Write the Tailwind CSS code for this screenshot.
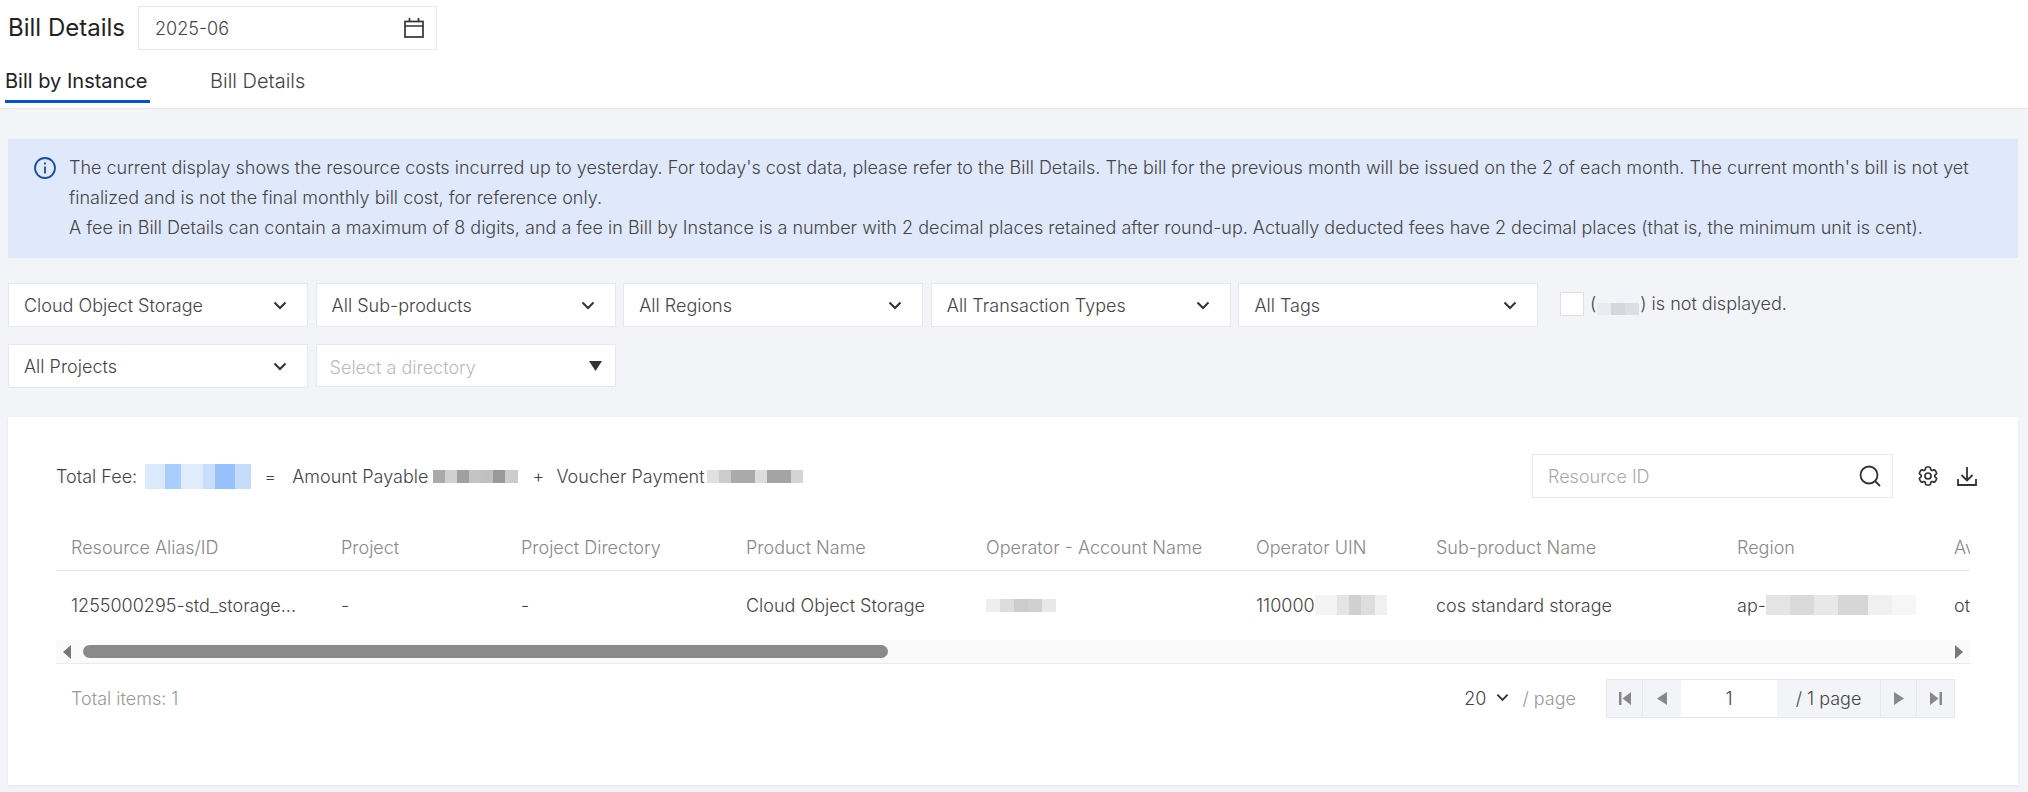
<!DOCTYPE html>
<html lang="en">
<head>
  <meta charset="UTF-8" />
  <title>Bill Details</title>
  <script src="https://cdn.jsdelivr.net/npm/@tailwindcss/browser@4"></script>
</head>

<body class="h-[792px] w-[2028px] overflow-hidden bg-[#f2f4f8] font-['Inter',sans-serif] text-[18px] font-light text-[#444]">
  <!-- page header -->
  <div class="h-[109px] border-b border-[#e4e6eb] bg-white">
    <div class="flex items-center pt-[6px] pl-[8px]">
      <h1 class="w-[130px] text-[24px] leading-[44px] font-normal text-[#222]">Bill Details</h1>
      <div class="flex h-[44px] w-[299px] items-center justify-between border border-[#e6e8ec] pr-[12px] pl-[16px]">
        <span>2025-06</span>
        <svg class="h-[20px] w-[20px]" viewBox="0 0 20 20" fill="none" stroke="#333" stroke-width="1.7"><rect x="1" y="3.5" width="18" height="15.5"/><path d="M1 8h18M5.5 0v3.5M14.500 0v3.500"/></svg>
      </div>
    </div>
    <div class="mt-[14px] flex pl-[5px] text-[20px]">
      <div class="h-[39px] w-[145px] border-b-[3px] border-[#0052d9] leading-[34px] font-normal whitespace-nowrap text-[#222]">Bill by Instance</div>
      <div class="ml-[60px] leading-[34px] text-[#444]">Bill Details</div>
    </div>
  </div>

  <!-- notice -->
  <div class="mx-[8px] mt-[30px] flex h-[119px] w-[2010px] bg-[#e0e9fb] pt-[14px] pl-[26px] leading-[30px]">
    <svg class="mt-[4px] h-[22px] w-[22px] shrink-0" viewBox="0 0 22 22" fill="none" stroke="#1a4fa3" stroke-width="1.8"><circle cx="11" cy="11" r="10"/><path d="M11 9.500v7M11 5.500v2"/></svg>
    <div class="ml-[13px] w-[1930px]">
      <p>The current display shows the resource costs incurred up to yesterday. For today's cost data, please refer to the Bill Details. The bill for the previous month will be issued on the 2 of each month. The current month's bill is not yet finalized and is not the final monthly bill cost, for reference only.</p>
      <p>A fee in Bill Details can contain a maximum of 8 digits, and a fee in Bill by Instance is a number with 2 decimal places retained after round-up. Actually deducted fees have 2 decimal places (that is, the minimum unit is cent).</p>
    </div>
  </div>

  <!-- filters -->
  <div class="mt-[25px] ml-[8px] flex items-start gap-x-[7.6px]">
    <div class="flex h-[44px] w-[300px] items-center justify-between border border-[#e6e8ec] bg-white pr-[20px] pl-[15px]">Cloud Object Storage
      <svg class="h-[9px] w-[14px]" viewBox="0 0 14 9" fill="none" stroke="#333" stroke-width="2"><path d="M1.500 1.500 7 7l5.500-5.500"/></svg></div>
    <div class="flex h-[44px] w-[300px] items-center justify-between border border-[#e6e8ec] bg-white pr-[20px] pl-[15px]">All Sub-products
      <svg class="h-[9px] w-[14px]" viewBox="0 0 14 9" fill="none" stroke="#333" stroke-width="2"><path d="M1.500 1.500 7 7l5.500-5.500"/></svg></div>
    <div class="flex h-[44px] w-[300px] items-center justify-between border border-[#e6e8ec] bg-white pr-[20px] pl-[15px]">All Regions
      <svg class="h-[9px] w-[14px]" viewBox="0 0 14 9" fill="none" stroke="#333" stroke-width="2"><path d="M1.500 1.500 7 7l5.500-5.500"/></svg></div>
    <div class="flex h-[44px] w-[300px] items-center justify-between border border-[#e6e8ec] bg-white pr-[20px] pl-[15px]">All Transaction Types
      <svg class="h-[9px] w-[14px]" viewBox="0 0 14 9" fill="none" stroke="#333" stroke-width="2"><path d="M1.500 1.500 7 7l5.500-5.500"/></svg></div>
    <div class="flex h-[44px] w-[300px] items-center justify-between border border-[#e6e8ec] bg-white pr-[20px] pl-[15px]">All Tags
      <svg class="h-[9px] w-[14px]" viewBox="0 0 14 9" fill="none" stroke="#333" stroke-width="2"><path d="M1.500 1.500 7 7l5.500-5.500"/></svg></div>
    <div class="ml-[14px] flex h-[41px] items-center">
      <span class="h-[24px] w-[24px] border border-[#dcdfe6] bg-white"></span>
      <span class="ml-[6px]">(</span>
      <span class="mx-[1px] flex h-[22px] w-[42px] items-end"><i class="h-[12px] w-[14px] bg-[#e9ebef]"></i><i class="h-[12px] w-[14px] bg-[#d5d7dc]"></i><i class="h-[12px] w-[14px] bg-[#dcdee3]"></i></span>
      <span>) is not displayed.</span>
    </div>
  </div>
  <div class="mt-[17px] ml-[8px] flex items-start gap-x-[7.6px]">
    <div class="flex h-[44px] w-[300px] items-center justify-between border border-[#e6e8ec] bg-white pr-[20px] pl-[15px]">All Projects
      <svg class="h-[9px] w-[14px]" viewBox="0 0 14 9" fill="none" stroke="#333" stroke-width="2"><path d="M1.500 1.500 7 7l5.500-5.500"/></svg></div>
    <div class="flex h-[43px] w-[300px] items-center justify-between border border-[#e6e8ec] bg-white pr-[13px] pl-[13px] text-[#bbb]">
      <span class="mt-[4px]">Select a directory</span>
      <svg class="h-[10px] w-[13px]" viewBox="0 0 13 10" fill="#333"><path d="M0 0h13L6.500 10z"/></svg></div>
  </div>

  <!-- bill table card -->
  <div class="mt-[29px] ml-[8px] h-[368px] w-[2010px] bg-white px-[48px] shadow-[0_1px_3px_rgba(0,0,0,0.06)]">
    <div class="flex h-[117px] items-center pt-[1px]">
      <span>Total Fee:</span>
      <span class="ml-[8px] flex h-[25px] w-[106px]"><i class="w-[20px] bg-[#dbe9fd]"></i><i class="w-[16px] bg-[#a9cdfd]"></i><i class="w-[22px] bg-[#e0ecfd]"></i><i class="w-[12px] bg-[#c7defd]"></i><i class="w-[20px] bg-[#97c1fc]"></i><i class="w-[16px] bg-[#c5dcfc]"></i></span>
      <span class="ml-[13px] w-[28px]">=</span>
      <span>Amount Payable</span>
      <span class="ml-[5px] flex h-[13px]"><i class="w-[12px] bg-[#aaa]"></i><i class="w-[12px] bg-[#d0d0d0]"></i><i class="w-[12px] bg-[#a0a0a0]"></i><i class="w-[12px] bg-[#c4c4c4]"></i><i class="w-[12px] bg-[#c0c0c0]"></i><i class="w-[12px] bg-[#999]"></i><i class="w-[13px] bg-[#ccc]"></i></span>
      <span class="ml-[14px] w-[24px]">+</span>
      <span>Voucher Payment</span>
      <span class="ml-[2px] flex h-[13px]"><i class="w-[12px] bg-[#e0e0e0]"></i><i class="w-[12px] bg-[#ccc]"></i><i class="w-[24px] bg-[#aaa]"></i><i class="w-[12px] bg-[#ddd]"></i><i class="w-[24px] bg-[#a4a4a4]"></i><i class="w-[12px] bg-[#d4d4d4]"></i></span>
      <div class="ml-auto flex h-[44px] w-[361px] items-center justify-between border border-[#e6e8ec] pr-[11px] pl-[15px] text-[#aaa]">Resource ID
        <svg class="h-[22px] w-[22px]" viewBox="0 0 22 22" fill="none" stroke="#333" stroke-width="1.800"><circle cx="10" cy="10" r="8.500"/><path d="m16 16 5 5"/></svg></div>
      <svg class="ml-[23px] h-[24px] w-[24px]" viewBox="0 0 24 24" fill="none" stroke="#333" stroke-width="1.700"><path d="M9.594 3.940c.09-.542.56-.94 1.110-.94h2.593c.55 0 1.020.398 1.110.94l.213 1.281c.063.374.313.686.645.870.074.04.147.083.22.127.325.196.72.257 1.075.124l1.217-.456a1.125 1.125 0 0 1 1.370.49l1.296 2.247a1.125 1.125 0 0 1-.26 1.431l-1.003.827c-.293.241-.438.613-.43.992a7.723 7.723 0 0 1 0 .255c-.008.378.137.75.43.991l1.004.827c.424.35.534.955.26 1.430l-1.298 2.247a1.125 1.125 0 0 1-1.369.491l-1.217-.456c-.355-.133-.75-.072-1.076.124a6.470 6.470 0 0 1-.22.128c-.331.183-.581.495-.644.869l-.213 1.281c-.09.543-.56.94-1.110.94h-2.594c-.55 0-1.019-.398-1.110-.94l-.213-1.281c-.062-.374-.312-.686-.644-.870a6.520 6.520 0 0 1-.22-.127c-.325-.196-.72-.257-1.076-.124l-1.217.456a1.125 1.125 0 0 1-1.369-.49l-1.297-2.247a1.125 1.125 0 0 1 .26-1.431l1.004-.827c.292-.24.437-.613.43-.991a6.932 6.932 0 0 1 0-.255c.007-.38-.138-.751-.43-.992l-1.004-.827a1.125 1.125 0 0 1-.26-1.430l1.297-2.247a1.125 1.125 0 0 1 1.370-.491l1.216.456c.356.133.751.072 1.076-.124.072-.044.146-.086.22-.128.332-.183.582-.495.644-.869l.214-1.280Z"/><circle cx="12" cy="12" r="3"/></svg>
      <svg class="mr-[-8px] ml-[16px] h-[22px] w-[22px]" viewBox="0 0 22 22" fill="none" stroke="#333" stroke-width="1.800"><path d="M11 2v13M5.500 10l5.500 5.500 5.500-5.500M2 14v6h18v-6"/></svg>
    </div>

    <div class="w-[1914px] overflow-hidden">
      <table class="w-[2400px] table-fixed border-collapse text-left">
        <colgroup>
          <col class="w-[270px]" /><col class="w-[180px]" /><col class="w-[225px]" /><col class="w-[240px]" /><col class="w-[270px]" /><col class="w-[180px]" /><col class="w-[301px]" /><col class="w-[217px]" /><col class="w-[517px]" />
        </colgroup>
        <thead>
          <tr class="h-[36px] align-top text-[#888]">
            <th class="pl-[15px] font-light">Resource Alias/ID</th>
            <th class="pl-[15px] font-light">Project</th>
            <th class="pl-[15px] font-light">Project Directory</th>
            <th class="pl-[15px] font-light">Product Name</th>
            <th class="pl-[15px] font-light">Operator - Account Name</th>
            <th class="pl-[15px] font-light">Operator UIN</th>
            <th class="pl-[15px] font-light">Sub-product Name</th>
            <th class="pl-[15px] font-light">Region</th>
            <th class="pl-[15px] font-light">Availability Zone</th>
          </tr>
        </thead>
        <tbody>
          <tr class="h-[70px] border-t border-[#e8eaee]">
            <td class="pl-[15px] whitespace-nowrap">1255000295-std_storage...</td>
            <td class="pl-[15px]">-</td>
            <td class="pl-[15px]">-</td>
            <td class="pl-[15px]">Cloud Object Storage</td>
            <td class="pl-[15px]"><span class="flex h-[13px]"><i class="w-[14px] bg-[#eee]"></i><i class="w-[14px] bg-[#ddd]"></i><i class="w-[14px] bg-[#ccc]"></i><i class="w-[14px] bg-[#d0d0d0]"></i><i class="w-[14px] bg-[#e8e8e8]"></i></span></td>
            <td class="pl-[15px]"><span class="flex items-center">110000<span class="flex h-[20px] w-[72px]"><i class="w-[22px] bg-[#f4f4f4]"></i><i class="w-[12px] bg-[#e4e4e4]"></i><i class="w-[12px] bg-[#d0d0d0]"></i><i class="w-[14px] bg-[#ddd]"></i><i class="w-[12px] bg-[#f0f0f0]"></i></span></span></td>
            <td class="pl-[15px]">cos standard storage</td>
            <td class="pl-[15px]"><span class="flex items-center">ap-<span class="flex h-[20px]"><i class="w-[24px] bg-[#e4e4e4]"></i><i class="w-[24px] bg-[#dadada]"></i><i class="w-[24px] bg-[#e8e8e8]"></i><i class="w-[30px] bg-[#d6d6d6]"></i><i class="w-[24px] bg-[#f0f0f0]"></i><i class="w-[24px] bg-[#f6f6f6]"></i></span></span></td>
            <td class="pl-[15px]">other</td>
          </tr>
        </tbody>
      </table>
    </div>

    <!-- horizontal scrollbar -->
    <div class="flex h-[24px] w-[1914px] items-center border-b border-[#e8eaee] bg-[#fafafa]">
      <svg class="ml-[7px] h-[14px] w-[8px]" viewBox="0 0 8 14" fill="#777"><path d="M8 0v14L0 7z"/></svg>
      <div class="ml-[12px] h-[13px] w-[805px] rounded-full bg-[#8a8a8a]"></div>
      <svg class="mr-[7px] ml-auto h-[14px] w-[8px]" viewBox="0 0 8 14" fill="#777"><path d="M0 0v14l8-7z"/></svg>
    </div>

    <!-- pagination -->
    <div class="flex w-[1899px] items-start pt-[15px] pl-[15px]">
      <span class="mt-[6px] text-[#999]">Total items: 1</span>
      <span class="mt-[6px] ml-auto">20</span>
      <svg class="mt-[14px] ml-[10px] h-[9px] w-[13px]" viewBox="0 0 14 9" fill="none" stroke="#333" stroke-width="2"><path d="M1.500 1.500 7 7l5.500-5.500"/></svg>
      <span class="mt-[6px] ml-[13px] text-[#999]">/ page</span>
      <div class="ml-[30px] flex h-[39px] items-stretch border border-[#e6e8ec] bg-[#f2f4f8]">
        <div class="flex w-[36px] items-center justify-center border-r border-[#e6e8ec]"><svg class="h-[13px] w-[12px]" viewBox="0 0 12 13" fill="#888"><path d="M0 0h2.500v13H0zM12 0v13L3.500 6.500z"/></svg></div>
        <div class="flex w-[38px] items-center justify-center"><svg class="h-[13px] w-[10px]" viewBox="0 0 10 13" fill="#888"><path d="M10 0v13L0 6.500z"/></svg></div>
        <div class="flex w-[96px] items-center justify-center bg-white">1</div>
        <div class="flex w-[104px] items-center justify-center border-r border-[#e6e8ec]">/ 1 page</div>
        <div class="flex w-[36px] items-center justify-center border-r border-[#e6e8ec]"><svg class="h-[13px] w-[10px]" viewBox="0 0 10 13" fill="#888"><path d="M0 0v13l10-6.500z"/></svg></div>
        <div class="flex w-[37px] items-center justify-center"><svg class="h-[13px] w-[12px]" viewBox="0 0 12 13" fill="#888"><path d="M0 0v13l8.500-6.500zM9.500 0H12v13H9.500z"/></svg></div>
      </div>
    </div>
  </div>
</body>
</html>
